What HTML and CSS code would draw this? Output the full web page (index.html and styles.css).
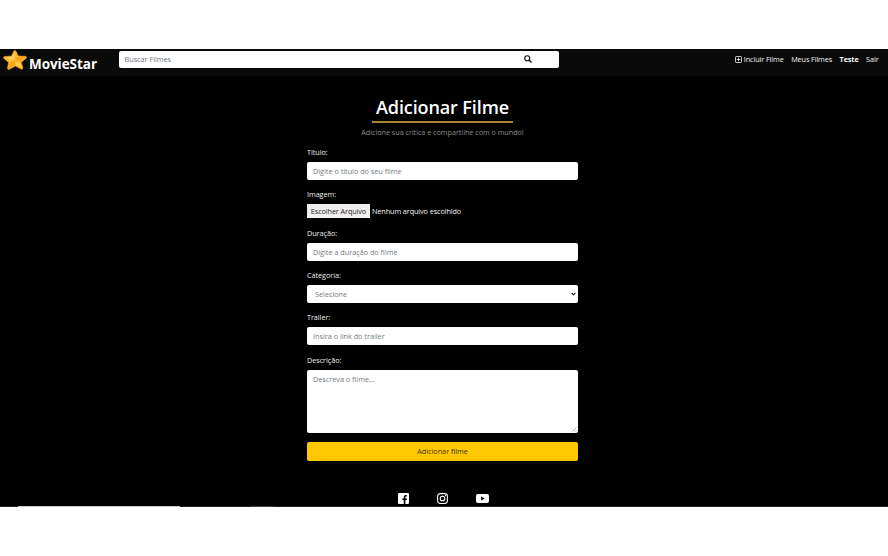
FILE: index.html
```html
<!DOCTYPE html>
<html lang="pt-BR">
<head>
<meta charset="utf-8">
<title>MovieStar</title>
<link rel="stylesheet" href="styles.css">
</head>
<body>
<div class="page">
  <header class="navbar">
    <a class="brand">
      <svg class="star" viewBox="0 0 24 20">
        <path fill="#fdb52a" stroke="#f0a01c" stroke-width=".6" stroke-linejoin="round" d="M11 .7Q12.2.1 13 1.2L15.3 6 22.8 6.3Q24.2 7 23.1 8.3L18.3 12.3 19.9 18Q19.7 19.7 18 19L12.4 16.1 6 19.4Q4.3 19.7 4.5 18L5.6 12.4.7 8.3Q0 6.8 1.7 6.5L8.5 6Z"/>
        <path fill="#ffca4a" d="M11.8 1 9.3 7 1.2 7.2 8 11.2 12 10.2ZM12 10.2 16.8 12.2 19 18.5 12.3 14.8Z"/>
        <path fill="#f8a51c" d="M12 10.2 8 11.2 5.2 18.7 12.3 14.8ZM12 10.2 15 7 22.8 7 16.8 12.2Z"/>
        <path fill="#ffe08a" d="M11.6 2.2 9.8 7.2 4 7.6 10.8 8.5Z"/>
      </svg>
      <span class="brand-name">MovieStar</span>
    </a>
    <form class="search">
      <span class="search-text">Buscar Filmes</span>
      <svg class="search-icon" viewBox="0 0 16 16"><circle cx="6.5" cy="6.5" r="5" fill="none" stroke="#111" stroke-width="2.3"/><path d="M10 10l5 5" stroke="#111" stroke-width="2.8"/></svg>
    </form>
    <nav class="links">
      <a class="add"><svg class="plus" viewBox="0 0 16 16"><rect x="1.2" y="1.2" width="13.6" height="13.6" rx="1.5" fill="none" stroke="#fff" stroke-width="1.8"/><path d="M8 4v8M4 8h8" stroke="#fff" stroke-width="1.8"/></svg>Incluir Filme</a>
      <a>Meus Filmes</a>
      <a class="user">Teste</a>
      <a>Sair</a>
    </nav>
  </header>
  <main class="content">
    <h1 class="title">Adicionar Filme</h1>
    <p class="subtitle">Adicione sua crítica e compartilhe com o mundo!</p>
    <form class="form">
      <div class="group"><label>Título:</label><div class="control"><span>Digite o título do seu filme</span></div></div>
      <div class="group group-file"><label>Imagem:</label><div class="file"><span class="file-button">Escolher Arquivo</span><span>Nenhum arquivo escolhido</span></div></div>
      <div class="group"><label>Duração:</label><div class="control"><span>Digite a duração do filme</span></div></div>
      <div class="group"><label>Categoria:</label><div class="control select"><span>Selecione</span><svg class="caret" viewBox="0 0 6 4"><path d="M.8.8 3 3 5.2.8" fill="none" stroke="#111" stroke-width="1.3"/></svg></div></div>
      <div class="group"><label>Trailer:</label><div class="control"><span>Insira o link do trailer</span></div></div>
      <div class="group group-area"><label>Descrição:</label><div class="control area"><span>Descreva o filme...</span><svg class="grip" viewBox="0 0 5 5"><path d="M.5 4.5l4-4M3 4.7 4.7 3" stroke="#777" stroke-width=".6"/></svg></div></div>
      <div class="submit">Adicionar filme</div>
    </form>
  </main>
  <footer class="footer">
    <svg class="facebook" viewBox="0 0 22 22"><rect width="22" height="22" rx="2.5" fill="#fff"/><path d="M11.5 22v-8H8.7v-3.2h2.8V8.4c0-2.8 1.7-4.3 4.2-4.3.9 0 1.8.1 2.2.2v2.8h-1.4c-1.4 0-1.8.8-1.8 1.7v2h3.1l-.5 3.2h-2.6v8z" fill="#000"/></svg>
    <svg class="instagram" viewBox="0 0 22 22"><rect x="1.2" y="1.2" width="19.6" height="19.6" rx="5.2" fill="none" stroke="#fff" stroke-width="2.1"/><circle cx="11" cy="11" r="4.6" fill="none" stroke="#fff" stroke-width="2.2"/><circle cx="16.8" cy="5.3" r="1.4" fill="#fff"/></svg>
    <svg class="youtube" viewBox="0 0 26 18"><rect width="26" height="18" rx="3.8" fill="#fff"/><path d="M10.3 5v8l7-4z" fill="#000"/></svg>
  </footer>
  <div class="edge"><i class="edge-light"></i><i class="edge-mark"></i></div>
</div>
</body>
</html>
```
FILE: styles.css
```css
* { box-sizing: border-box; }
body {
  margin: 0;
  padding-top: 49px;
  height: 556px;
  overflow: hidden;
  background: #fff;
  font: 7.25px/10px "Open Sans", "Noto Sans", sans-serif;
  color: #ececec;
}
.page { display: flex; flex-direction: column; height: 458px; background: #000; }
svg { display: block; flex: none; }
span, a { white-space: nowrap; }
.navbar { display: flex; align-items: flex-start; height: 27px; background: #0a0a0a; flex: none; }
.brand { display: flex; width: 119px; padding: 1px 0 0 3px; }
.star { width: 24px; height: 20px; }
.brand-name { margin: 4px 0 0 2px; font-size: 13.5px; line-height: 20px; font-weight: 700; letter-spacing: -0.05px; color: #fff; }
.search { display: flex; align-items: center; width: 439.5px; height: 17px; margin-top: 2px; padding-left: 5.5px; border-radius: 2px; background: #fff; color: #707579; }
.search-text { width: 399.5px; line-height: 9px; padding-bottom: 1px; }
.search-icon { width: 8px; height: 8px; margin-top: -1px; }
.links { display: flex; margin: 5px 9.5px 0 auto; gap: 7.5px; color: #f4f4f4; letter-spacing: -0.1px; }
.add { display: flex; align-items: center; gap: 2px; }
.plus { width: 7px; height: 7px; }
.user { font-weight: 700; color: #fff; }
.content { width: 271px; margin: 20px 0 0 307px; }
.title {
  width: 141px;
  height: 27px;
  margin: 0 0 4px 65px;
  border-bottom: 2px solid #a88436;
  font-size: 18px;
  line-height: 23px;
  font-weight: 600;
  letter-spacing: -0.1px;
  text-align: center;
  color: #fff;
}
.subtitle { margin: 0; text-align: center; color: #8c8c8c; white-space: nowrap; letter-spacing: -0.04px; }
.form { margin-top: 10px; }
.group { height: 42.25px; }
.group label { display: block; height: 15px; letter-spacing: -0.05px; }
.control { display: flex; align-items: center; height: 18px; padding: 0 6px; border-radius: 2px; background: #fff; color: #73797e; }
.group-file { height: 38.5px; }
.file { display: flex; align-items: center; gap: 2px; height: 14px; color: #f4f4f4; letter-spacing: -0.09px; }
.file-button { width: 63px; line-height: 14px; text-align: center; background: #efefef; color: #222; }
.select { justify-content: space-between; padding: 0 2px 0 8px; }
.caret { width: 5px; height: 4px; }
.group-area { height: 87px; }
.area { position: relative; align-items: flex-start; height: 63px; padding-top: 4px; }
.grip { position: absolute; right: 1px; bottom: 1px; width: 5px; height: 5px; }
.submit { height: 19px; border-radius: 2px; background: #ffc800; color: #3c3010; line-height: 19px; text-align: center; }
.footer { display: flex; align-items: center; gap: 29px; height: 11px; margin: auto 0 2px 397.5px; }
.facebook { width: 11px; height: 11px; }
.instagram { width: 11px; height: 11px; margin: 0 -1px 0 -0.6px; }
.youtube { width: 13px; height: 9px; }
.edge { display: flex; height: 1px; background: #222022; flex: none; }
.edge-light { width: 162px; margin-left: 18px; background: #ccc9c9; }
.edge-mark { width: 23px; margin-left: 70px; background: #444; }
```
